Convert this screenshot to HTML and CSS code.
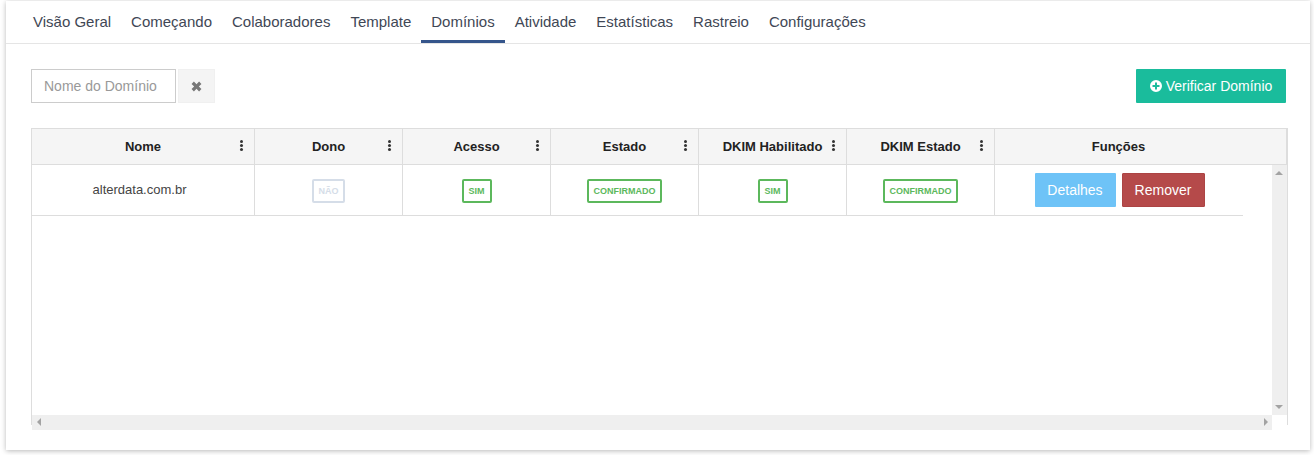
FILE: index.html
```html
<!DOCTYPE html>
<html lang="pt">
<head>
<meta charset="utf-8">
<title>Domínios</title>
<link rel="stylesheet" href="styles.css">
</head>
<body>
<main class="card">
  <nav class="tabs">
    <a class="tab">Visão Geral</a>
    <a class="tab">Começando</a>
    <a class="tab">Colaboradores</a>
    <a class="tab">Template</a>
    <a class="tab active">Domínios</a>
    <a class="tab">Atividade</a>
    <a class="tab">Estatísticas</a>
    <a class="tab">Rastreio</a>
    <a class="tab">Configurações</a>
  </nav>
  <section class="content">
    <div class="toolbar">
      <div class="filter">
        <input class="search" type="text" placeholder="Nome do Domínio">
        <button class="clear" type="button" aria-label="Limpar">
          <svg class="clear-icon" viewBox="0 0 10 10"><path d="M1.2 3 3 1.2 5 3.2 7 1.2 8.8 3 6.8 5 8.8 7 7 8.8 5 6.8 3 8.8 1.2 7 3.2 5Z"/></svg>
        </button>
      </div>
      <button class="verify" type="button">
        <svg class="plus-icon" viewBox="0 0 12 12"><path fill-rule="evenodd" d="M6 0a6 6 0 1 1 0 12A6 6 0 0 1 6 0ZM5 2.5V5H2.5v2H5v2.5h2V7h2.5V5H7V2.5Z"/></svg>
        Verificar Domínio
      </button>
    </div>
    <div class="grid">
      <div class="head">
        <div class="hcell c1"><span>Nome</span><i class="dots"></i></div>
        <div class="hcell c2"><span>Dono</span><i class="dots"></i></div>
        <div class="hcell c2"><span>Acesso</span><i class="dots"></i></div>
        <div class="hcell c2"><span>Estado</span><i class="dots"></i></div>
        <div class="hcell c2"><span>DKIM Habilitado</span><i class="dots"></i></div>
        <div class="hcell c2"><span>DKIM Estado</span><i class="dots"></i></div>
        <div class="hcell c3"><span>Funções</span></div>
      </div>
      <div class="viewport">
        <div class="rows">
          <div class="row">
            <div class="cell c1 name">alterdata.com.br</div>
            <div class="cell c2"><span class="badge off">NÃO</span></div>
            <div class="cell c2"><span class="badge on">SIM</span></div>
            <div class="cell c2"><span class="badge on wide">CONFIRMADO</span></div>
            <div class="cell c2"><span class="badge on">SIM</span></div>
            <div class="cell c2"><span class="badge on wide">CONFIRMADO</span></div>
            <div class="cell c4">
              <button class="btn info" type="button">Detalhes</button>
              <button class="btn danger" type="button">Remover</button>
            </div>
          </div>
        </div>
        <div class="vbar"><i class="arrow up"></i><i class="arrow down"></i></div>
        <div class="hbar"><i class="arrow left"></i><i class="arrow right"></i></div>
        <div class="corner"></div>
      </div>
    </div>
  </section>
</main>
</body>
</html>
```
FILE: styles.css
```css
* { box-sizing: border-box; }
html, body { height: 100%; }
body {
  margin: 0;
  padding: 1px 4px 5px 6px;
  background: #fff;
  font-family: "Liberation Sans", Arial, sans-serif;
  color: #333;
  overflow: hidden;
}
.card {
  height: 449px;
  background: #fff;
  box-shadow: 0 1px 5px rgba(0, 0, 0, .28);
}
.tabs {
  display: flex;
  height: 43px;
  padding-left: 17px;
  border-bottom: 1px solid #e5e5e5;
}
.tab {
  height: 42px;
  padding: 12px 10px 0;
  font-size: 15px;
  line-height: 17px;
  color: #3f4755;
  border-bottom: 3px solid transparent;
}
.tab.active { border-bottom-color: #35558b; }
.content { padding: 25px 22px 0 25px; }
.toolbar {
  display: flex;
  justify-content: space-between;
  height: 34px;
  margin-right: 2px;
}
.filter { display: flex; gap: 2px; }
.search {
  width: 145px;
  height: 34px;
  padding: 0 12px;
  border: 1px solid #ccc;
  border-radius: 0;
  font: 14px "Liberation Sans", Arial, sans-serif;
  color: #555;
  outline: 0;
}
.search::placeholder { color: #999; opacity: 1; }
.clear {
  display: flex;
  align-items: center;
  justify-content: center;
  width: 37px;
  height: 34px;
  padding: 0;
  background: #f4f4f4;
  border: 1px solid #f0f0f0;
}
.clear-icon { width: 13px; height: 13px; fill: #777; }
.verify {
  display: flex;
  align-items: center;
  justify-content: center;
  gap: 4px;
  width: 150px;
  height: 34px;
  padding: 0;
  background: #1abc9c;
  border: 0;
  border-radius: 1px;
  color: #fff;
  font: 14px "Liberation Sans", Arial, sans-serif;
}
.plus-icon { width: 12px; height: 12px; fill: #fff; }
.grid {
  width: 1257px;
  height: 297px;
  margin-top: 25px;
  border: solid #ddd;
  border-width: 1px 1px 0;
}
.head {
  display: flex;
  height: 36px;
  background: #f5f5f5;
  border-bottom: 1px solid #ddd;
  border-right: 1px solid #ddd;
  font-size: 13px;
  font-weight: 700;
  color: #222;
}
.c1 { width: 223px; flex: none; }
.c2 { width: 148px; flex: none; }
.c3 { flex: 1; }
.c4 { width: 248px; flex: none; }
.hcell {
  position: relative;
  display: flex;
  align-items: center;
  justify-content: center;
  border-right: 1px solid #ddd;
}
.hcell.c3 { padding-right: 44px; border-right: 0; }
.dots {
  position: absolute;
  top: 11px;
  right: 11px;
  width: 3px;
  height: 3px;
  border-radius: 50%;
  background: #333;
  box-shadow: 0 4px 0 #333, 0 8px 0 #333;
}
.viewport {
  display: grid;
  grid-template-columns: 1240px 15px;
  grid-template-rows: 250px 15px;
}
.rows { overflow: hidden; }
.row {
  display: flex;
  width: 1211px;
  height: 51px;
  border-bottom: 1px solid #ddd;
}
.cell {
  display: flex;
  align-items: flex-start;
  justify-content: center;
  padding-top: 14px;
  border-right: 1px solid #ddd;
  font-size: 13px;
  color: #444;
}
.cell.name { padding: 17px 7px 0 0; line-height: 15px; }
.cell.c4 { gap: 6px; padding: 8px 0 0 1px; border-right: 0; }
.badge {
  height: 24px;
  padding: 0;
  border: 2px solid;
  border-radius: 2px;
  font-size: 9px;
  font-weight: 700;
  line-height: 20px;
  text-align: center;
}
.badge.on { width: 30px; color: #5cb85c; border-color: #5cb85c; }
.badge.on.wide { width: 75px; }
.badge.off { width: 33px; color: #d5dde8; border-color: #d5dde8; }
.btn {
  height: 34px;
  padding: 0;
  border: 1px solid transparent;
  border-radius: 1px;
  color: #fff;
  font: 14px "Liberation Sans", Arial, sans-serif;
}
.btn.info { width: 81px; background: #6ec3f7; }
.btn.danger { width: 83px; background: #b54a4a; border-color: #ac4444; }
.vbar, .hbar { position: relative; background: #efefef; }
.corner { background: #fff; }
.arrow { position: absolute; width: 0; height: 0; border: 4px solid transparent; }
.arrow.up { top: 2px; left: 3px; border-bottom-color: #a3a3a3; }
.arrow.down { bottom: 2px; left: 3px; border-top-color: #a3a3a3; }
.arrow.left { left: 1px; top: 3px; border-right-color: #a3a3a3; }
.arrow.right { right: 0; top: 3px; border-left-color: #a3a3a3; }
```
